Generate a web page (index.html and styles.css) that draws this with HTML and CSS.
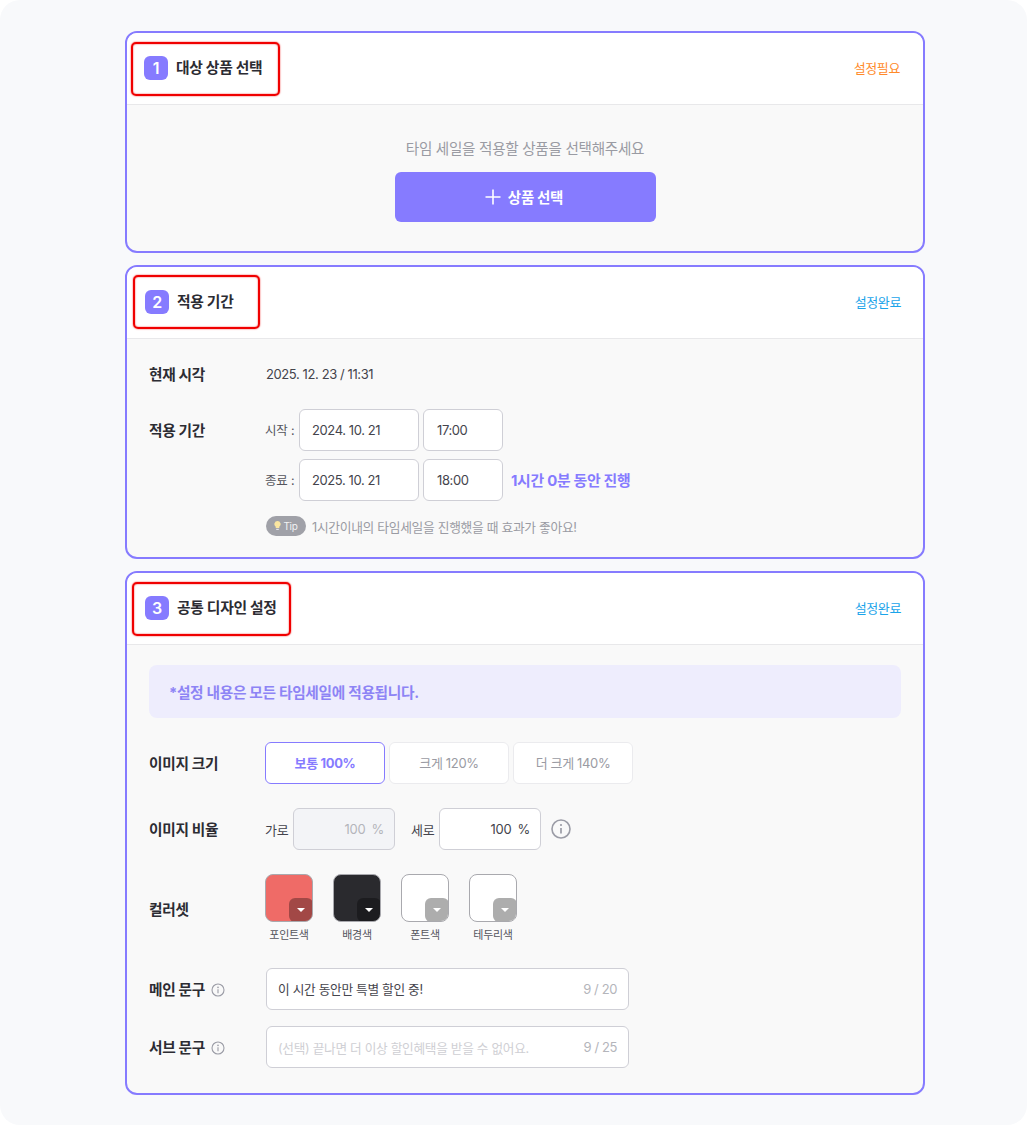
FILE: index.html
```html
<!DOCTYPE html>
<html lang="ko">
<head>
<meta charset="utf-8">
<title>타임 세일 설정</title>
<link rel="stylesheet" href="styles.css">
</head>
<body>
<main class="page">
  <section class="panel panel-1">
    <header class="panel-head">
      <div class="title"><span class="num">1</span><h2>대상 상품 선택</h2></div>
      <span class="state need">설정필요</span>
      <span class="mark mark-1"></span>
    </header>
    <div class="panel-body empty">
      <p class="empty-text">타임 세일을 적용할 상품을 선택해주세요</p>
      <button class="add-btn">
        <svg width="16" height="16" viewBox="0 0 16 16"><path d="M8 .5v15M.5 8h15" stroke="#fff" stroke-width="1.6" fill="none"/></svg>
        상품 선택
      </button>
    </div>
  </section>

  <section class="panel panel-2">
    <header class="panel-head">
      <div class="title title-b"><span class="num">2</span><h2>적용 기간</h2></div>
      <span class="state done">설정완료</span>
      <span class="mark mark-2"></span>
    </header>
    <div class="panel-body period">
      <div class="row-now"><span class="label">현재 시각</span><span class="now">2025. 12. 23 / 11:31</span></div>
      <div class="row-period">
        <span class="label label-period">적용 기간</span>
        <div class="period-fields">
          <div class="field-line"><span class="mini">시작 :</span><span class="box date">2024. 10. 21</span><span class="box time">17:00</span></div>
          <div class="field-line"><span class="mini">종료 :</span><span class="box date">2025. 10. 21</span><span class="box time">18:00</span><strong class="duration">1시간 0분 동안 진행</strong></div>
          <div class="tip-line"><span class="tip"><svg width="7" height="10" viewBox="0 0 7 10"><path d="M3.5 0a3.2 3.2 0 0 0-1.8 5.8V7h3.6V5.8A3.2 3.2 0 0 0 3.5 0z" fill="#fbe6a0"/><path d="M2.2 7.8h2.6V9H2.2z" fill="#e2e2e6"/></svg>Tip</span><span class="tip-text">1시간이내의 타임세일을 진행했을 때 효과가 좋아요!</span></div>
        </div>
      </div>
    </div>
  </section>

  <section class="panel panel-3">
    <header class="panel-head">
      <div class="title title-b"><span class="num">3</span><h2>공통 디자인 설정</h2></div>
      <span class="state done">설정완료</span>
      <span class="mark mark-3"></span>
    </header>
    <div class="panel-body design">
      <div class="notice">*설정 내용은 모든 타임세일에 적용됩니다.</div>
      <div class="row row-size">
        <span class="label">이미지 크기</span>
        <div class="options">
          <span class="option active">보통 100%</span>
          <span class="option">크게 120%</span>
          <span class="option">더 크게 140%</span>
        </div>
      </div>
      <div class="row row-ratio">
        <span class="label">이미지 비율</span>
        <div class="ratio">
          <span class="mini-lg">가로</span>
          <span class="box ratio-box disabled">100&nbsp;%</span>
          <span class="mini-lg second">세로</span>
          <span class="box ratio-box">100&nbsp;%</span>
          <svg class="info-lg" width="20" height="20" viewBox="0 0 20 20"><circle cx="10" cy="10" r="9" fill="none" stroke="#9b9ca6" stroke-width="1.6"/><circle cx="10" cy="6" r="1.1" fill="#9b9ca6"/><path d="M10 9v5.5" stroke="#9b9ca6" stroke-width="1.7"/></svg>
        </div>
      </div>
      <div class="row row-color">
        <span class="label">컬러셋</span>
        <div class="swatches">
          <div class="swatch-item"><span class="swatch red"><span class="drop"><i></i></span></span><span class="swatch-name">포인트색</span></div>
          <div class="swatch-item"><span class="swatch dark"><span class="drop"><i></i></span></span><span class="swatch-name">배경색</span></div>
          <div class="swatch-item"><span class="swatch"><span class="drop light"><i></i></span></span><span class="swatch-name">폰트색</span></div>
          <div class="swatch-item"><span class="swatch"><span class="drop light"><i></i></span></span><span class="swatch-name">테두리색</span></div>
        </div>
      </div>
      <div class="row row-text">
        <span class="label label-info">메인 문구
          <svg width="14" height="14" viewBox="0 0 14 14"><circle cx="7" cy="7" r="6" fill="none" stroke="#9b9ca6" stroke-width="1.1"/><circle cx="7" cy="4.4" r=".8" fill="#9b9ca6"/><path d="M7 6.2v4" stroke="#9b9ca6" stroke-width="1.1"/></svg>
        </span>
        <div class="box text-box"><span class="text-val">이 시간 동안만 특별 할인 중!</span><span class="count">9 / 20</span></div>
      </div>
      <div class="row row-text row-sub">
        <span class="label label-info">서브 문구
          <svg width="14" height="14" viewBox="0 0 14 14"><circle cx="7" cy="7" r="6" fill="none" stroke="#9b9ca6" stroke-width="1.1"/><circle cx="7" cy="4.4" r=".8" fill="#9b9ca6"/><path d="M7 6.2v4" stroke="#9b9ca6" stroke-width="1.1"/></svg>
        </span>
        <div class="box text-box"><span class="text-ph">(선택) 끝나면 더 이상 할인혜택을 받을 수 없어요.</span><span class="count">9 / 25</span></div>
      </div>
    </div>
  </section>
</main>
</body>
</html>
```
FILE: styles.css
```css
* { box-sizing: border-box; }
html, body { margin: 0; padding: 0; }
html { background: #fff; }
body {
  background: #f8f9fb;
  border-radius: 20px;
  font-family: Inter, "Noto Sans CJK KR", sans-serif;
  color: #2c2c33;
  letter-spacing: -0.3px;
  height: 1125px;
  overflow: hidden;
}
.page {
  width: 800px;
  margin-left: 125px;
  padding-top: 31px;
  display: flex;
  flex-direction: column;
  gap: 12px;
}
.panel {
  border: 2px solid #867bff;
  border-radius: 12px;
  overflow: hidden;
  background: #f9f9f9;
}
.panel-head {
  position: relative;
  height: 72px;
  background: #fff;
  border-bottom: 1px solid #e8e8ea;
  display: flex;
  align-items: center;
  justify-content: space-between;
  padding: 0 23px 2px 17px;
}
.title { display: flex; align-items: center; gap: 8px; }
.title-b { padding-left: 1px; }
.title h2 { margin: 0; font-size: 14.8px; font-weight: 700; line-height: 20px; color: #2c2c33; }
.num {
  width: 24px; height: 24px;
  border-radius: 6px;
  background: #867bff;
  color: #fff;
  font-size: 16px; font-weight: 600;
  display: flex; align-items: center; justify-content: center;
}
.state { font-size: 13px; letter-spacing: -0.4px; }
.need { color: #ff8a2a; }
.done { color: #1ba4ea; margin-right: -1px; }
.mark {
  position: absolute;
  border: 2px solid #f00000;
  border-radius: 5px;
  box-shadow: 0 0 1.5px #f00000, inset 0 0 1.5px #f00000;
  pointer-events: none;
}
.mark-1 { left: 4px; top: 9px; width: 149px; height: 54px; }
.mark-2 { left: 6px; top: 8px; width: 127px; height: 54px; }
.mark-3 { left: 5px; top: 9px; width: 159px; height: 54px; }

.empty { height: 146px; padding-top: 33px; display: flex; flex-direction: column; align-items: center; }
.empty-text { margin: 0 0 12px; font-size: 14.6px; line-height: 22px; color: #9a9ba3; }
.add-btn {
  width: 261px; height: 50px;
  border: 0; border-radius: 6px;
  padding: 0 2px 2px 0;
  background: #867bff;
  color: #fff;
  font: 700 14.5px Inter, "Noto Sans CJK KR", sans-serif;
  letter-spacing: -0.3px;
  display: flex; align-items: center; justify-content: center; gap: 7px;
}
.add-btn svg { margin-top: 2px; }
.label { font-size: 14.7px; font-weight: 700; line-height: 20px; padding-top: 2px; color: #2c2c33; }
.box {
  display: flex; align-items: center;
  background: #fff;
  border: 1px solid #cfcfd6;
  border-radius: 6px;
  height: 42px;
  font-size: 13px;
  letter-spacing: -0.4px;
  color: #44444c;
}

.period { height: 218px; padding: 25px 22px 0; }
.row-now { display: flex; align-items: center; height: 20px; }
.row-now .label { width: 117px; }
.now { font-size: 13px; letter-spacing: -0.4px; color: #44444c; }
.row-period { display: flex; margin-top: 25px; }
.label-period { width: 117px; padding-top: 12px; }
.period-fields { display: flex; flex-direction: column; gap: 8px; }
.field-line { display: flex; align-items: center; }
.mini { width: 34px; margin-left: -1px; padding-bottom: 2px; font-size: 12.5px; letter-spacing: -0.2px; color: #55555d; white-space: nowrap; }
.date { width: 120px; padding-left: 12px; }
.time { width: 80px; margin-left: 4px; padding-left: 13px; }
.duration { margin-left: 8px; padding-bottom: 2px; font-size: 14.9px; font-weight: 700; color: #867bff; }
.tip-line { display: flex; align-items: center; margin-top: 7px; }
.tip {
  width: 40px; height: 20px;
  border-radius: 10px;
  background: #a0a1a8;
  color: #f2f2f4;
  font-size: 10px;
  display: flex; align-items: center; justify-content: center; gap: 2px;
  margin-right: 6px;
}
.tip-text { font-size: 12.75px; color: #9a9ba3; }

.design { height: 448px; padding: 20px 22px 0; }
.notice {
  height: 53px;
  padding-left: 20px;
  background: #eeedfd;
  border-radius: 8px;
  color: #8d84f5;
  font-size: 14.7px; font-weight: 700;
  display: flex; align-items: center;
}
.row { display: flex; align-items: center; }
.row > .label { width: 116px; flex: none; }
.row-size { margin-top: 24px; }
.options { display: flex; gap: 4px; }
.option {
  width: 120px; height: 42px;
  padding-bottom: 2px;
  background: #fff;
  border: 1px solid #ebebee;
  border-radius: 6px;
  font-size: 13px; letter-spacing: -0.35px; color: #9a9ba3;
  display: flex; align-items: center; justify-content: center;
}
.option.active { border-color: #867bff; color: #867bff; font-weight: 700; }
.row-ratio { margin-top: 24px; }
.ratio { display: flex; align-items: center; }
.mini-lg { font-size: 13px; color: #44444c; width: 28px; white-space: nowrap; }
.second { margin-left: 16px; }
.ratio-box { width: 102px; justify-content: flex-end; padding-right: 10px; font-size: 13px; letter-spacing: -0.2px; word-spacing: 2.5px; }
.disabled { background: #f3f4f7; color: #b4b5bb; }
.info-lg { margin-left: 10px; }
.row-color { margin-top: 24px; align-items: flex-start; }
.row-color > .label { padding-top: 26px; }
.swatches { display: flex; gap: 20px; }
.swatch-item { width: 48px; display: flex; flex-direction: column; align-items: center; }
.swatch {
  position: relative;
  display: block;
  flex: none;
  width: 48px; height: 48px;
  border: 1px solid #a9a9ae;
  border-radius: 8px;
  background: #fff;
  overflow: hidden;
}
.red { background: #ef6b67; }
.dark { background: #2a2a2e; }
.drop {
  position: absolute; right: -1px; bottom: -1px;
  width: 24px; height: 24px;
  border-radius: 6px;
  background: rgba(0,0,0,.32);
  display: flex; align-items: center; justify-content: center;
}
.drop.light { background: #adadad; }
.drop i {
  width: 0; height: 0;
  border-left: 4.5px solid transparent;
  border-right: 4.5px solid transparent;
  border-top: 4.5px solid #fff;
}
.swatch-name { margin-top: 5px; font-size: 11px; line-height: 16px; color: #55555d; white-space: nowrap; }
.row-text { margin-top: 25px; }
.row-text.row-sub { margin-top: 16px; }
.label-info { display: flex; align-items: center; gap: 6px; white-space: nowrap; }
.row > .label-info { width: 117px; }
.text-box { width: 363px; justify-content: space-between; padding: 0 11px; letter-spacing: -0.3px; }
.text-val { font-size: 12.7px; margin-bottom: 2px; color: #44444c; }
.text-ph { font-size: 12.7px; color: #cfcfd4; }
.count { font-size: 13px; letter-spacing: -0.4px; color: #b4b5bb; }
```
